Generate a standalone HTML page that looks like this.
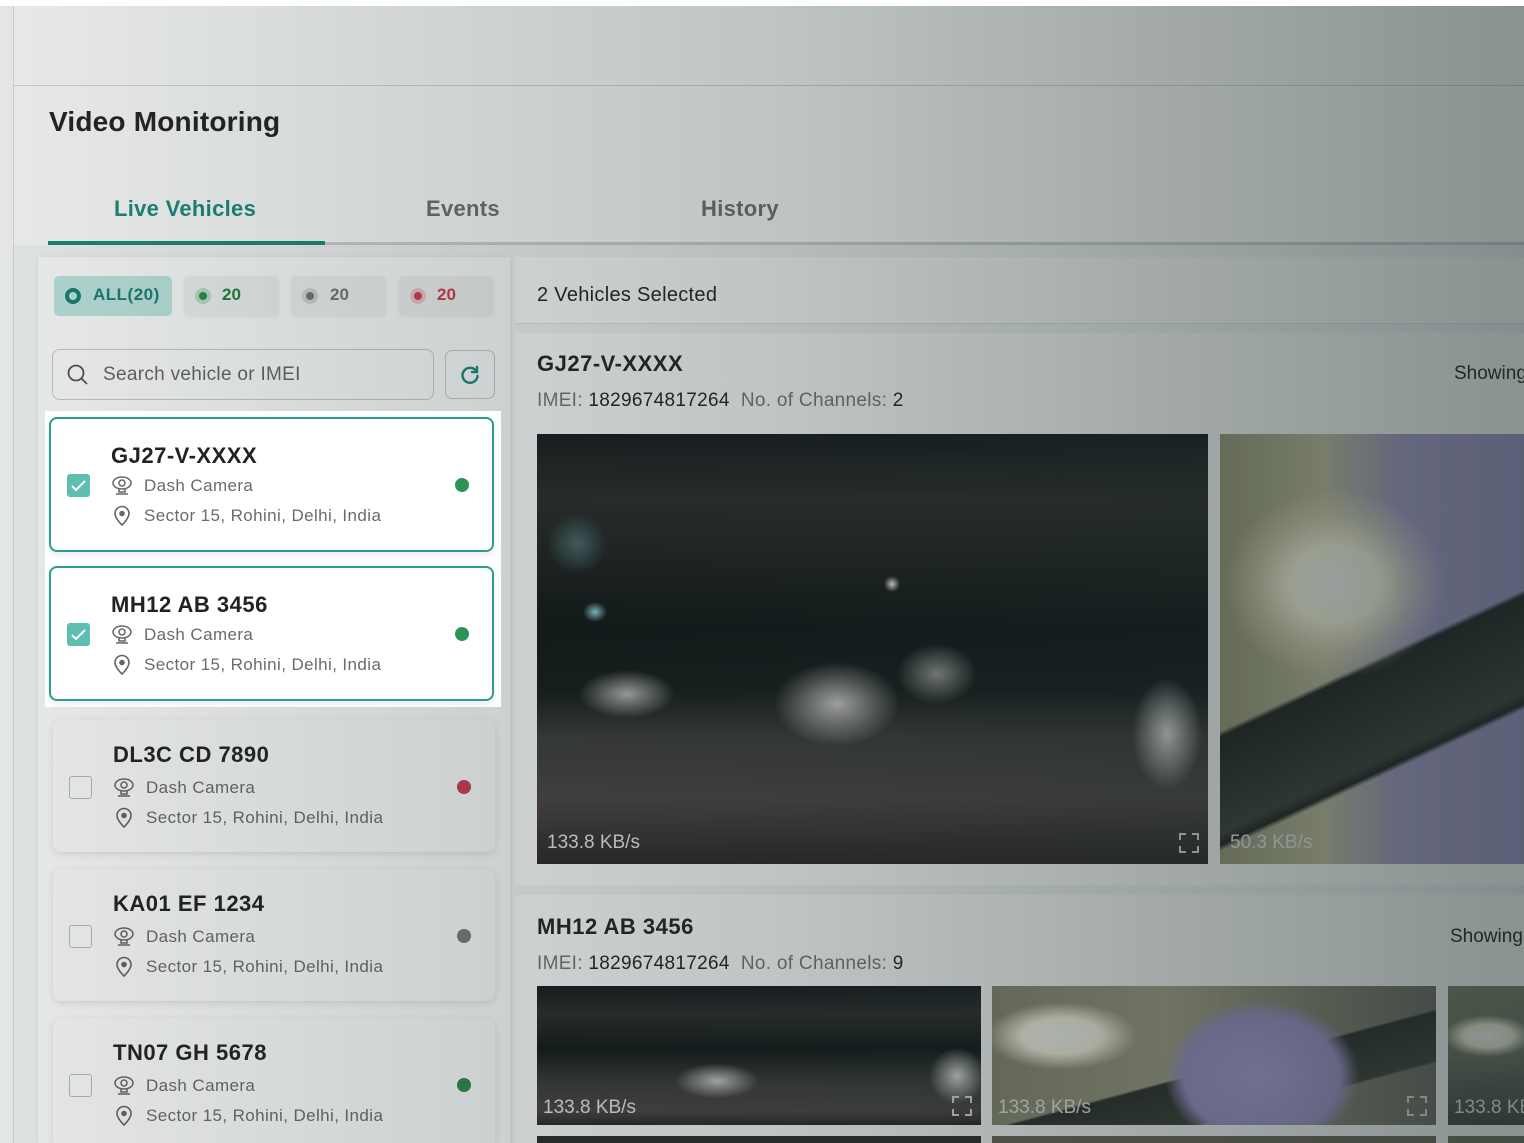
<!DOCTYPE html>
<html style="width:1524px;height:1143px;overflow:hidden"><head><meta charset="utf-8"><style>
*{box-sizing:border-box;margin:0;padding:0}
body{width:1524px;height:1143px;overflow:hidden;position:relative;background:#fff;font-family:"Liberation Sans",sans-serif;color:#222}
.a{position:absolute}
.ov{position:absolute;left:0;top:6px;width:1524px;height:1137px;z-index:5;background:linear-gradient(to right,rgba(30,45,45,0.10),rgba(30,45,45,0.28) 50%,rgba(30,45,45,0.52));pointer-events:none}
.card{position:absolute;border-radius:8px;background:#fff}
.sel{border:2px solid #2a9d8f;box-shadow:0 3px 6px rgba(0,0,0,0.08)}
.uns{box-shadow:0 2px 8px rgba(0,0,0,0.12);background:#fdfdfd}
.plate{position:absolute;left:60px;top:22px;font-size:22px;font-weight:bold;color:#222;letter-spacing:0.5px}
.ln{position:absolute;left:60px;font-size:17px;color:#6b6b6b;letter-spacing:0.4px}
.ln svg{position:absolute;left:0;top:-1px}
.ln span{position:absolute;left:33px;white-space:nowrap}
.cb{position:absolute;left:16px;top:56px;width:23px;height:23px;border-radius:3px}
.dot{position:absolute;right:24px;top:60px;width:14px;height:14px;border-radius:50%}
.vid{position:absolute;overflow:hidden}
.kb{position:absolute;left:10px;bottom:10px;color:#e8e8e8;font-size:19px}
.fs{position:absolute;right:8px;bottom:10px}
</style></head><body>
<div class="a" style="left:0;top:6px;width:14px;height:1137px;background:#fbfbfb;border-right:1px solid #ddd"></div>
<div class="a" style="left:14px;top:85px;width:1510px;height:1px;background:#d6d8d8"></div>
<div class="a" style="left:49px;top:106px;font-size:28px;font-weight:bold;color:#222;letter-spacing:0.2px">Video Monitoring</div>
<div class="a" style="left:114px;top:196px;font-size:22px;font-weight:bold;color:#1a8a7a;letter-spacing:0.3px">Live Vehicles</div>
<div class="a" style="left:426px;top:196px;font-size:22px;font-weight:bold;color:#707070;letter-spacing:0.3px">Events</div>
<div class="a" style="left:701px;top:196px;font-size:22px;font-weight:bold;color:#707070;letter-spacing:0.3px">History</div>
<div class="a" style="left:48px;top:242px;width:1476px;height:3px;background:#d0d2d2"></div>
<div class="a" style="left:48px;top:241px;width:277px;height:4px;background:#1a8a7a"></div>
<div class="a" style="left:14px;top:245px;width:1510px;height:898px;background:#f4f6f6"></div>
<div class="a" style="left:38px;top:257px;width:472px;height:886px;background:#fff;box-shadow:0 0 4px rgba(0,0,0,0.08)"></div>
<div class="a" style="left:54px;top:276px;width:118px;height:40px;border-radius:5px;background:#bfe6e0"></div>
<div class="a" style="left:65px;top:288px;width:16px;height:16px;border-radius:50%;border:4px solid #1a7f72"></div>
<div class="a" style="left:93px;top:285px;font-size:17px;font-weight:bold;color:#1a7f72;letter-spacing:0.5px">ALL(20)</div>
<div class="a" style="left:184px;top:276px;width:95px;height:40px;border-radius:5px;background:#f2f3f3;box-shadow:0 1px 3px rgba(0,0,0,0.06)"></div>
<div class="a" style="left:195px;top:288px;width:16px;height:16px;border-radius:50%;background:#b8e0c4"></div><div class="a" style="left:199px;top:292px;width:8px;height:8px;border-radius:50%;background:#2a8a4a"></div>
<div class="a" style="left:222px;top:285px;font-size:17px;font-weight:bold;color:#1e7f3e">20</div>
<div class="a" style="left:291px;top:276px;width:95px;height:40px;border-radius:5px;background:#f2f3f3;box-shadow:0 1px 3px rgba(0,0,0,0.06)"></div>
<div class="a" style="left:302px;top:288px;width:16px;height:16px;border-radius:50%;background:#d6d6d6"></div><div class="a" style="left:306px;top:292px;width:8px;height:8px;border-radius:50%;background:#777"></div>
<div class="a" style="left:330px;top:285px;font-size:17px;font-weight:bold;color:#777">20</div>
<div class="a" style="left:399px;top:276px;width:95px;height:40px;border-radius:5px;background:#f2f3f3;box-shadow:0 1px 3px rgba(0,0,0,0.06)"></div>
<div class="a" style="left:410px;top:288px;width:16px;height:16px;border-radius:50%;background:#f3c4cb"></div><div class="a" style="left:414px;top:292px;width:8px;height:8px;border-radius:50%;background:#d03a50"></div>
<div class="a" style="left:437px;top:285px;font-size:17px;font-weight:bold;color:#d03a50">20</div>
<div class="a" style="left:52px;top:349px;width:382px;height:51px;border:1.5px solid #c8cacc;border-radius:8px;background:#fff"></div>
<svg class="a" style="left:66px;top:363px" width="24" height="24" viewBox="0 0 24 24" fill="none" stroke="#555" stroke-width="1.8"><circle cx="10" cy="10" r="7.5"/><path d="M15.5 15.5L21 21"/></svg>
<div class="a" style="left:103px;top:364px;font-size:19px;color:#666;letter-spacing:0.3px">Search vehicle or IMEI</div>
<div class="a" style="left:445px;top:350px;width:50px;height:49px;border:1.5px solid #c8cacc;border-radius:7px;background:#fff"></div>
<svg class="a" style="left:458px;top:363px" width="24" height="24" viewBox="0 0 24 24" fill="none" stroke="#1a8a7a" stroke-width="2.4" stroke-linecap="round"><path d="M18.5 8.5A7.5 7.5 0 1 0 19.5 13"/><path d="M19 4v5h-5"/></svg>
<div class="card uns" style="left:53px;top:720px;width:442px;height:132px">
<div class="plate" style="top:22px">DL3C CD 7890</div>
<div class="cb" style="border:1.5px solid #b8babc"></div>
<div class="ln" style="top:58px"><svg width="22" height="22" viewBox="0 0 22 22" fill="none" stroke="#666" stroke-width="1.5"><ellipse cx="11" cy="8" rx="9" ry="6"/><circle cx="11" cy="8" r="3"/><path d="M8 14v3h6v-3M5 19h12"/></svg><span>Dash Camera</span></div>
<div class="ln" style="top:88px"><svg width="22" height="22" viewBox="0 0 22 22" fill="none" stroke="#666" stroke-width="1.6"><path d="M11 20s7-6.5 7-11.5a7 7 0 0 0-14 0C4 13.5 11 20 11 20z"/><circle cx="11" cy="8.5" r="2" fill="#666"/></svg><span>Sector 15, Rohini, Delhi, India</span></div>
<div class="dot" style="background:#d03a50"></div></div>
<div class="card uns" style="left:53px;top:869px;width:442px;height:132px">
<div class="plate">KA01 EF 1234</div>
<div class="cb" style="border:1.5px solid #b8babc"></div>
<div class="ln" style="top:58px"><svg width="22" height="22" viewBox="0 0 22 22" fill="none" stroke="#666" stroke-width="1.5"><ellipse cx="11" cy="8" rx="9" ry="6"/><circle cx="11" cy="8" r="3"/><path d="M8 14v3h6v-3M5 19h12"/></svg><span>Dash Camera</span></div>
<div class="ln" style="top:88px"><svg width="22" height="22" viewBox="0 0 22 22" fill="none" stroke="#666" stroke-width="1.6"><path d="M11 20s7-6.5 7-11.5a7 7 0 0 0-14 0C4 13.5 11 20 11 20z"/><circle cx="11" cy="8.5" r="2" fill="#666"/></svg><span>Sector 15, Rohini, Delhi, India</span></div>
<div class="dot" style="background:#7a7a7a"></div></div>
<div class="card uns" style="left:53px;top:1018px;width:442px;height:125px;border-radius:8px 8px 0 0">
<div class="plate">TN07 GH 5678</div>
<div class="cb" style="border:1.5px solid #b8babc"></div>
<div class="ln" style="top:58px"><svg width="22" height="22" viewBox="0 0 22 22" fill="none" stroke="#666" stroke-width="1.5"><ellipse cx="11" cy="8" rx="9" ry="6"/><circle cx="11" cy="8" r="3"/><path d="M8 14v3h6v-3M5 19h12"/></svg><span>Dash Camera</span></div>
<div class="ln" style="top:88px"><svg width="22" height="22" viewBox="0 0 22 22" fill="none" stroke="#666" stroke-width="1.6"><path d="M11 20s7-6.5 7-11.5a7 7 0 0 0-14 0C4 13.5 11 20 11 20z"/><circle cx="11" cy="8.5" r="2" fill="#666"/></svg><span>Sector 15, Rohini, Delhi, India</span></div>
<div class="dot" style="background:#2a8a4a"></div></div>
<div class="a" style="left:515px;top:257px;width:1009px;height:67px;background:#fff;border-bottom:1px solid #e2e4e4"></div>
<div class="a" style="left:537px;top:284px;font-size:20px;color:#222;letter-spacing:0.3px">2 Vehicles Selected</div>
<div class="a" style="left:515px;top:333px;width:1009px;height:552px;background:#fff"></div>
<div class="a" style="left:537px;top:351px;font-size:22px;font-weight:bold;color:#222;letter-spacing:0.5px">GJ27-V-XXXX</div>
<div class="a" style="left:537px;top:390px;font-size:19px;color:#777;letter-spacing:0.3px">IMEI: <span style="color:#222">1829674817264</span>&nbsp; No. of Channels: <span style="color:#222">2</span></div>
<div class="a" style="left:1454px;top:363px;font-size:19px;color:#222;white-space:nowrap">Showing</div>
<div class="vid" style="left:537px;top:434px;width:671px;height:430px;background:
radial-gradient(ellipse 12px 10px at 58px 178px,#9ad8e0,transparent),
radial-gradient(ellipse 30px 30px at 40px 110px,rgba(120,170,180,0.5),transparent),
radial-gradient(ellipse 8px 8px at 355px 150px,#fff,transparent),
radial-gradient(ellipse 90px 60px at 300px 270px,#d4d0cc,transparent 70%),
radial-gradient(ellipse 50px 80px at 630px 300px,#ddd,transparent 70%),
radial-gradient(ellipse 40px 30px at 400px 240px,#999,transparent),
radial-gradient(ellipse 60px 30px at 90px 260px,#bbb,transparent 80%),
linear-gradient(#15181a 0%,#2a2c2a 15%,#1d201e 30%,#0e1414 45%,#151a1a 60%,#3a3a38 70%,#4a4442 85%,#2a2624 100%)">
<div class="kb">133.8 KB/s</div>
<svg class="fs" width="22" height="22" viewBox="0 0 22 22" fill="none" stroke="#ddd" stroke-width="2"><path d="M2 8V2h6M14 2h6v6M20 14v6h-6M8 20H2v-6"/></svg></div>
<div class="vid" style="left:1220px;top:434px;width:304px;height:430px;background:
radial-gradient(ellipse 110px 95px at 115px 150px,#ffffff,#fffbe0 40%,rgba(240,235,200,0.5) 70%,transparent),
linear-gradient(155deg,transparent 52%,#1e201e 53%,#3a3e36 70%,#1e201e 72%,transparent 73%),
linear-gradient(to right,#9a9878 0%,#c4c0a0 35%,#a49cc8 60%,#a098c8 100%)">
<div class="kb">50.3 KB/s</div></div>
<div class="a" style="left:515px;top:895px;width:1009px;height:248px;background:#fff"></div>
<div class="a" style="left:537px;top:914px;font-size:22px;font-weight:bold;color:#222;letter-spacing:0.5px">MH12 AB 3456</div>
<div class="a" style="left:537px;top:953px;font-size:19px;color:#777;letter-spacing:0.3px">IMEI: <span style="color:#222">1829674817264</span>&nbsp; No. of Channels: <span style="color:#222">9</span></div>
<div class="a" style="left:1450px;top:926px;font-size:19px;color:#222;white-space:nowrap">Showing</div>
<div class="vid" style="left:537px;top:986px;width:444px;height:139px;background:
radial-gradient(ellipse 60px 25px at 180px 95px,#ccc,transparent 70%),
radial-gradient(ellipse 40px 40px at 420px 90px,#ddd,transparent 70%),
linear-gradient(#15181a 0%,#2a2c2a 20%,#101616 45%,#3a3a38 70%,#4a4442 90%,#2a2624 100%)">
<div class="kb" style="left:6px;bottom:6px">133.8 KB/s</div>
<svg class="fs" style="bottom:8px" width="22" height="22" viewBox="0 0 22 22" fill="none" stroke="#ddd" stroke-width="2"><path d="M2 8V2h6M14 2h6v6M20 14v6h-6M8 20H2v-6"/></svg></div>
<div class="vid" style="left:992px;top:986px;width:444px;height:139px;background:
radial-gradient(ellipse 100px 45px at 70px 50px,#fff,#fffbe6 40%,transparent 75%),
radial-gradient(ellipse 130px 100px at 270px 90px,#b0a4e0,#a094cc 60%,transparent 75%),
linear-gradient(165deg,transparent 55%,#2a2c28 56%,#3a3e36 75%,transparent 76%),
linear-gradient(to right,#8a8870,#a8a488 40%,#6c6a60)">
<div class="kb" style="left:6px;bottom:6px">133.8 KB/s</div>
<svg class="fs" style="bottom:8px" width="22" height="22" viewBox="0 0 22 22" fill="none" stroke="#ddd" stroke-width="2"><path d="M2 8V2h6M14 2h6v6M20 14v6h-6M8 20H2v-6"/></svg></div>
<div class="vid" style="left:1448px;top:986px;width:76px;height:139px;background:
radial-gradient(ellipse 60px 28px at 40px 50px,#fff,#f4f0d8 40%,transparent 75%),
linear-gradient(#7a7e66,#6a7060 50%,#3e4440)">
<div class="kb" style="left:6px;bottom:6px;white-space:nowrap">133.8 KB/s</div></div>
<div class="a" style="left:537px;top:1136px;width:444px;height:7px;background:#2a2c2a"></div>
<div class="a" style="left:992px;top:1136px;width:444px;height:7px;background:#6a6656"></div>
<div class="a" style="left:1448px;top:1136px;width:76px;height:7px;background:#6a6e58"></div>
<div class="ov"></div>
<div class="a" style="left:45px;top:411px;width:456px;height:296px;background:#fff;z-index:10">
<div class="card sel" style="left:4px;top:6px;width:445px;height:135px">
<div class="plate" style="left:60px;top:24px">GJ27-V-XXXX</div>
<div class="cb" style="background:#5cbfb2;top:55px"><svg width="23" height="23" viewBox="0 0 23 23" fill="none" stroke="#fff" stroke-width="2"><path d="M5 12l4 4 9-9"/></svg></div>
<div class="ln" style="top:57px"><svg width="22" height="22" viewBox="0 0 22 22" fill="none" stroke="#666" stroke-width="1.5"><ellipse cx="11" cy="8" rx="9" ry="6"/><circle cx="11" cy="8" r="3"/><path d="M8 14v3h6v-3M5 19h12"/></svg><span>Dash Camera</span></div>
<div class="ln" style="top:87px"><svg width="22" height="22" viewBox="0 0 22 22" fill="none" stroke="#666" stroke-width="1.6"><path d="M11 20s7-6.5 7-11.5a7 7 0 0 0-14 0C4 13.5 11 20 11 20z"/><circle cx="11" cy="8.5" r="2" fill="#666"/></svg><span>Sector 15, Rohini, Delhi, India</span></div>
<div class="dot" style="background:#2e9456;right:23px;top:59px"></div></div>
<div class="card sel" style="left:4px;top:155px;width:445px;height:135px">
<div class="plate" style="left:60px;top:24px">MH12 AB 3456</div>
<div class="cb" style="background:#5cbfb2;top:55px"><svg width="23" height="23" viewBox="0 0 23 23" fill="none" stroke="#fff" stroke-width="2"><path d="M5 12l4 4 9-9"/></svg></div>
<div class="ln" style="top:57px"><svg width="22" height="22" viewBox="0 0 22 22" fill="none" stroke="#666" stroke-width="1.5"><ellipse cx="11" cy="8" rx="9" ry="6"/><circle cx="11" cy="8" r="3"/><path d="M8 14v3h6v-3M5 19h12"/></svg><span>Dash Camera</span></div>
<div class="ln" style="top:87px"><svg width="22" height="22" viewBox="0 0 22 22" fill="none" stroke="#666" stroke-width="1.6"><path d="M11 20s7-6.5 7-11.5a7 7 0 0 0-14 0C4 13.5 11 20 11 20z"/><circle cx="11" cy="8.5" r="2" fill="#666"/></svg><span>Sector 15, Rohini, Delhi, India</span></div>
<div class="dot" style="background:#2e9456;right:23px;top:59px"></div></div>
</div>
</body></html>
